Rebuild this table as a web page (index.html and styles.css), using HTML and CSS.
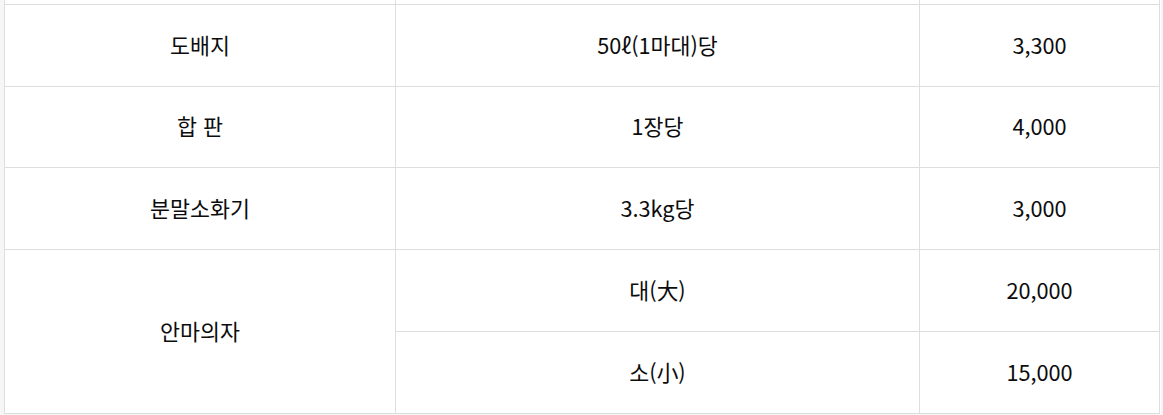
FILE: index.html
```html
<!DOCTYPE html>
<html lang="ko">
<head>
<meta charset="utf-8">
<title>요금표</title>
<link rel="stylesheet" href="styles.css">
</head>
<body>
<div class="page">
  <div class="fee-table">
    <div class="cell cell--stub"></div>
    <div class="cell cell--stub"></div>
    <div class="cell cell--stub"></div>

    <div class="cell">도배지</div>
    <div class="cell">50ℓ(1마대)당</div>
    <div class="cell">3,300</div>

    <div class="cell">합 판</div>
    <div class="cell">1장당</div>
    <div class="cell">4,000</div>

    <div class="cell">분말소화기</div>
    <div class="cell">3.3kg당</div>
    <div class="cell">3,000</div>

    <div class="cell cell--span2">안마의자</div>
    <div class="cell">대(大)</div>
    <div class="cell">20,000</div>
    <div class="cell">소(小)</div>
    <div class="cell">15,000</div>
  </div>
</div>
</body>
</html>
```

FILE: styles.css
```css
html, body {
  margin: 0;
  padding: 0;
  background: #ffffff;
}

.page {
  width: 1163px;
  height: 415px;
  overflow: hidden;
  background: #f6f6f6;
  padding-left: 4px;
  box-sizing: border-box;
}

.fee-table {
  display: grid;
  grid-template-columns: 391px 524px 240px;
  grid-template-rows: 5px 82px 81px 82px 82px 82px;
  width: 1156px;
  border-left: 1px solid #dedede;
  background: #ffffff;
  font-family: "Noto Sans CJK KR", "Noto Sans", sans-serif;
  font-size: 21.7px;
  color: #0c0c0c;
}

.cell {
  display: flex;
  align-items: center;
  justify-content: center;
  border-right: 1px solid #dedede;
  border-bottom: 1px solid #dedede;
  line-height: 1;
  padding-bottom: 2px;
}

.cell--stub {
  padding-bottom: 0;
}

.cell--span2 {
  grid-row: span 2;
}
```
